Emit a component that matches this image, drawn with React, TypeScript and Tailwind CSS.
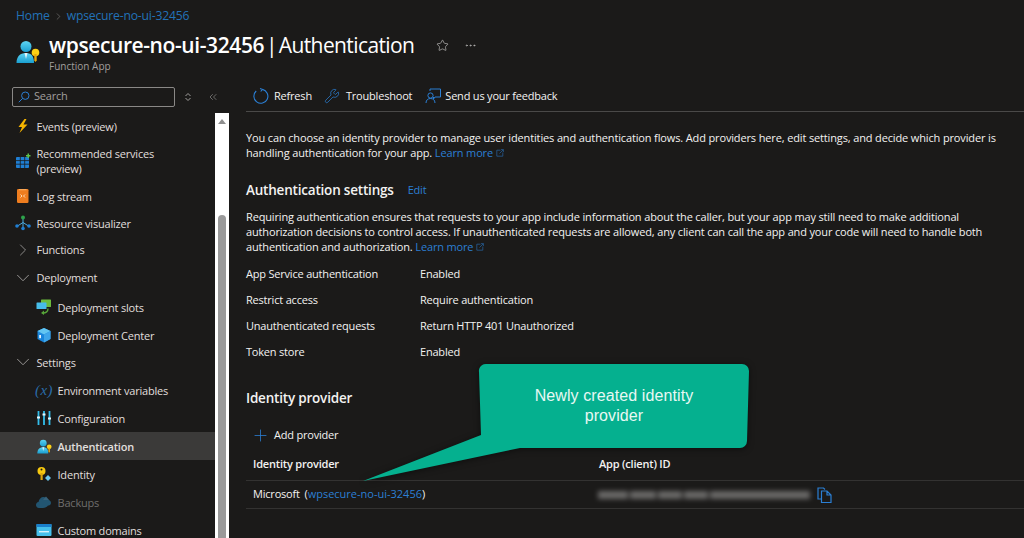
import React from "react";
import { ChevronRight, ChevronDown, Star, Ellipsis, ChevronsLeft, Wrench, Plus } from "lucide-react";

const UserKey = ({ s = 24 }: { s?: number }) => (
  <svg width={s} height={s} viewBox="0 0 24 24">
    <defs>
      <linearGradient id="uk" x1="0" y1="0" x2="0" y2="1"><stop offset="0" stopColor="#5ed4f2" /><stop offset="1" stopColor="#1a9fd0" /></linearGradient>
    </defs>
    <circle cx="10" cy="6.500" r="5.500" fill="url(#uk)" />
    <path d="M0.500 23c0-6 3-10 9.500-10 6 0 8 4 8 10z" fill="url(#uk)" />
    <path d="M8.500 13h3l-1.500 6z" fill="#fff" opacity=".85" />
    <circle cx="19.500" cy="12.500" r="3.800" fill="#fcd116" />
    <path d="M18.300 14h2.400v6.500l-1.200 1.500-1.200-1.500z" fill="#e8a90c" />
  </svg>
);

const Bolt = () => (
  <svg width="16" height="16" viewBox="0 0 16 16"><path d="M9.500 1 3.500 9h3.500L4.500 15 12.500 6.500H8.500L11.500 1z" fill="#f7b500" /></svg>
);
const GridIco = () => (
  <svg width="16" height="16" viewBox="0 0 16 16">
    <rect x="1" y="4" width="13" height="11" rx="1" fill="#1f7fd4" />
    <path d="M1 7.600h13M1 11.200h13M5.300 4v11M9.700 4v11" stroke="#1b1a19" strokeWidth=".8" />
    <path d="M12.500 0.500h1.500v1.500h1.500v1.500h-1.500v1.500h-1.500v-1.500h-1.500v-1.500h1.500z" fill="#5ec04c" />
  </svg>
);
const LogIco = () => (
  <svg width="16" height="16" viewBox="0 0 16 16">
    <rect x="2" y="1" width="11.500" height="14" rx="1.200" fill="#ee7d1f" />
    <path d="M5.500 6.500 7 8 5.500 9.500M10 6.500 8.500 8 10 9.500" stroke="#ffe3c4" strokeWidth=".9" fill="none" />
    <rect x="4" y="1" width="7.500" height="1.300" fill="#f9a655" />
  </svg>
);
const TreeIco = () => (
  <svg width="16" height="16" viewBox="0 0 16 16">
    <path d="M8 3v5M2.500 11 8 7.500l5.500 3.500M8 8v5" stroke="#4aa9e0" strokeWidth="1" fill="none" />
    <circle cx="8" cy="2.500" r="2" fill="#2ea34a" />
    <circle cx="2" cy="11" r="1.800" fill="#1f7fd4" /><circle cx="14" cy="11" r="1.800" fill="#1f7fd4" /><circle cx="8" cy="13.500" r="1.800" fill="#1f7fd4" />
  </svg>
);
const SlotsIco = () => (
  <svg width="16" height="16" viewBox="0 0 16 16">
    <rect x="5" y="0.500" width="10" height="7.500" rx=".6" fill="#6cbb3c" />
    <rect x="0.500" y="3.500" width="10" height="6.500" rx=".6" fill="#47bdea" />
    <path d="M12 9.500c0 3-2 4.500-5 4.500" stroke="#57a639" strokeWidth="1.400" fill="none" />
    <path d="M8 11.500 5 14l3 2z" fill="#57a639" />
  </svg>
);
const CubeIco = () => (
  <svg width="16" height="16" viewBox="0 0 16 16">
    <path d="M8 1 14.500 4v8L8 15.500 1.500 12V4z" fill="#1a86dc" />
    <path d="M8 1 14.500 4 8 7.500 1.500 4z" fill="#62c6f2" />
    <path d="M8 7.500 14.500 4v8L8 15.500z" fill="#3ea6ea" />
    <rect x="3.300" y="8" width="1.600" height="3.200" fill="#fff" />
  </svg>
);
const SliderIco = () => (
  <svg width="16" height="16" viewBox="0 0 16 16">
    <path d="M2.500 1v14M8 1v14M13.500 1v14" stroke="#32bdea" strokeWidth="1.800" />
    <path d="M1 7.500h3M6.500 4.500h3M12 8.500h3" stroke="#e6f6fc" strokeWidth="1.800" />
  </svg>
);
const KeyIco = () => (
  <svg width="16" height="16" viewBox="0 0 16 16">
    <circle cx="5.500" cy="5" r="4" fill="#f7c90f" />
    <rect x="4.500" y="7" width="2.200" height="7" fill="#dba50c" />
    <circle cx="5.500" cy="3.500" r="1" fill="#1b1a19" />
    <path d="m12 9 3 3-3 3-3-3z" fill="#6dc8ee" />
  </svg>
);
const CloudIco = () => (
  <svg width="16" height="16" viewBox="0 0 16 16" opacity=".5">
    <path d="M3 14C1 14 0 12.500 0 11s1-3 2.500-3C3 5 5 3 7.500 3c2 0 3 1 3.500 2.500 2 0 4 1.500 4 3.500 0 2-2 2.500-3 2.500C11 13 9 14 7 14z" fill="#2a90c8" />
    <path d="M7 6 10 2.500 13 6z" fill="#56aadb" />
  </svg>
);
const CardIco = () => (
  <svg width="16" height="16" viewBox="0 0 16 16">
    <rect x="0.500" y="2" width="15" height="12" rx="1" fill="#46c0ec" />
    <rect x="0.500" y="2" width="15" height="3" fill="#1a7fcb" />
    <rect x="3" y="9" width="10" height="1.400" fill="#d6f2fb" />
  </svg>
);
const FeedbackIco = () => (
  <svg width="16" height="16" viewBox="0 0 16 16" fill="none" stroke="#2b7fd4" strokeWidth="1">
    <circle cx="5.500" cy="7.500" r="2.600" />
    <path d="M1 15c0-3 2-4.500 4.500-4.500S10 12 10 15" />
    <path d="M5 3V1h10.500v8H10l-1.500 2V9" />
  </svg>
);
const RefreshIco = () => (
  <svg width="16" height="16" viewBox="0 0 16 16" fill="none" stroke="#2b7fd4" strokeWidth="1.100">
    <path d="M9.500 1.400A7 7 0 1 1 3.200 3" />
    <path d="M7 .5 9.500 1.400 7.700 3.500" />
  </svg>
);
const SearchIco = () => (
  <svg width="12" height="12" viewBox="0 0 12 12" fill="none" stroke="#2b7fd4" strokeWidth="1">
    <circle cx="7.300" cy="4.700" r="3.700" />
    <path d="M4.600 7.400.8 11.200" />
  </svg>
);
const ExtIco = () => (
  <svg width="8" height="8" viewBox="0 0 8 8" fill="none" stroke="#2b7fd4" strokeWidth=".7" className="inline -mt-[3px]" opacity=".75">
    <path d="M4.500 1.200H.8v6h6V3.500M3.500 4.500 7.300.7M5 .6h2.400V3" />
  </svg>
);
const CopyIco = () => (
  <svg width="15" height="16" viewBox="0 0 15 16" fill="none" stroke="#2b7fd4" strokeWidth="1.200">
    <path d="M5 12H1V1h5.500L8 2.500" />
    <path d="M4.500 4H10l4 4v7.500H4.500zM10 4v4h4" />
  </svg>
);

type Row = { label: React.ReactNode; icon?: React.ReactNode; h: string; sub?: boolean; active?: boolean; dim?: boolean };

const rows: Row[] = [
  { label: "Events (preview)", icon: <Bolt />, h: "h-[28px]" },
  { label: <>Recommended services<br />(preview)</>, icon: <GridIco />, h: "h-[42px]" },
  { label: "Log stream", icon: <LogIco />, h: "h-[28px]" },
  { label: "Resource visualizer", icon: <TreeIco />, h: "h-[26px]" },
  { label: "Functions", icon: <ChevronRight size={20} strokeWidth={1} color="#a19f9d" className="shrink-0" />, h: "h-[27px]" },
  { label: "Deployment", icon: <ChevronDown size={22} strokeWidth={1} color="#a19f9d" className="shrink-0" />, h: "h-[29px]" },
  { label: "Deployment slots", icon: <SlotsIco />, h: "h-[30px]", sub: true },
  { label: "Deployment Center", icon: <CubeIco />, h: "h-[26px]", sub: true },
  { label: "Settings", icon: <ChevronDown size={22} strokeWidth={1} color="#a19f9d" className="shrink-0" />, h: "h-[28px]" },
  { label: "Environment variables", icon: <span className="text-[15px] italic text-[#2a6ca8] leading-none whitespace-nowrap tracking-[0.5px] font-['Liberation_Serif',serif]">(x)</span>, h: "h-[28px]", sub: true },
  { label: "Configuration", icon: <SliderIco />, h: "h-[28px]", sub: true },
  { label: "Authentication", icon: <UserKey s={15} />, h: "h-[28px]", sub: true, active: true },
  { label: "Identity", icon: <KeyIco />, h: "h-[28px]", sub: true },
  { label: "Backups", icon: <CloudIco />, h: "h-[28px]", sub: true, dim: true },
  { label: "Custom domains", icon: <CardIco />, h: "h-[28px]", sub: true },
];

function SideRow({ r }: { r: Row }) {
  return (
    <div className={`${r.h} flex shrink-0 items-center ${r.active ? "bg-[#3b3a39] font-semibold" : ""} ${r.dim ? "text-[#6f6e6d]" : "text-[#e0dfdd]"} ${r.sub ? "pl-[36px]" : "pl-[15px]"}`}>
      <span className="w-[16px] h-[16px] flex items-center justify-center shrink-0">{r.icon}</span>
      <span className="leading-[15px] ml-[5.500px]">{r.label}</span>
    </div>
  );
}

const Setting = ({ k, v }: { k: string; v: string }) => (
  <div className="flex h-[26px] items-center">
    <span className="w-[174px]">{k}</span>
    <span>{v}</span>
  </div>
);

const link = "text-[#2b7fd4]";

export default function App() {
  return (
    <div className="relative w-[1024px] h-[538px] overflow-hidden bg-[#1b1a19] text-[#f3f2f1] text-[11px] font-['Open_Sans','Liberation_Sans',sans-serif] tracking-[-0.2px]">
      <div className="h-[33px] flex items-center pl-[16px] text-[#2272b8] text-[12.200px] pb-[1px]">
        <span>Home</span>
        <ChevronRight size={11} strokeWidth={1.2} color="#8a8886" className="mx-[3px]" />
        <span>wpsecure-no-ui-32456</span>
      </div>
      <div className="h-[45px] flex items-start pl-[16px]">
        <span className="mt-[7px] shrink-0"><UserKey s={24} /></span>
        <div className="ml-[9px] flex flex-col">
          <div className="flex items-center h-[24px]">
            <span className="text-[21px] leading-[24px] text-white whitespace-nowrap tracking-[-0.6px] [word-spacing:-3px]"><b className="font-semibold tracking-[-0.4px]">wpsecure-no-ui-32456</b> | Authentication</span>
            <Star size={13} strokeWidth={1.2} color="#c8c6c4" className="ml-[22px]" />
            <Ellipsis size={13} strokeWidth={1.2} color="#c8c6c4" className="ml-[15px]" />
          </div>
          <span className="mt-[2px] text-[10px] text-[#a19f9d] leading-[14px] tracking-normal">Function App</span>
        </div>
      </div>
      <div className="flex h-[460px]">
        <aside className="w-[229px] flex flex-col shrink-0">
          <div className="h-[35px] flex items-center pl-[12px] pt-[2px] shrink-0">
            <div className="w-[163px] h-[20px] border border-[#8a8886] rounded-[2px] flex items-center pl-[5px] text-[#a19f9d]">
              <SearchIco />
              <span className="ml-[4px]">Search</span>
            </div>
            <svg width="8" height="10" viewBox="0 0 8 10" className="ml-[9px]" fill="none" stroke="#a19f9d"><path d="M1.500 4 4 1.500 6.500 4M1.500 6 4 8.500 6.500 6" /></svg>
            <ChevronsLeft size={12} strokeWidth={1.2} color="#a19f9d" className="ml-[15px]" />
          </div>
          <div className="flex flex-1 min-h-0">
            <div className="w-[215px] overflow-hidden flex flex-col -mt-[1px]">
              {rows.map((r, i) => <SideRow key={i} r={r} />)}
            </div>
            <div className="w-[14px] bg-white flex flex-col items-center pt-[6px] relative">
              <div className="w-0 h-0 border-l-[4px] border-r-[4px] border-b-[5px] border-l-transparent border-r-transparent border-b-[#8f8f8f]" />
              <div className="w-[8px] rounded-t-[4px] bg-[#9a9a9a] absolute top-[102px] bottom-0" />
            </div>
          </div>
        </aside>
        <main className="flex-1 min-w-0 pl-[17px]">
          <div className="h-[34px] flex items-center border-b border-[#4a4948] text-[#f3f2f1] pl-[7px] pt-[3px]">
            <RefreshIco />
            <span className="ml-[5px]">Refresh</span>
            <Wrench size={16} strokeWidth={1.1} color="#2b7fd4" className="ml-[12px]" />
            <span className="ml-[6px]">Troubleshoot</span>
            <span className="ml-[13px]"><FeedbackIco /></span>
            <span className="ml-[4px]">Send us your feedback</span>
          </div>
          <p className="mt-[18px] leading-[15px] w-[770px] tracking-[-0.14px]">
            You can choose an identity provider to manage user identities and authentication flows. Add providers here, edit settings, and decide which provider is handling authentication for your app. <span className={link}>Learn more <ExtIco /></span>
          </p>
          <div className="mt-[20px] flex items-center h-[20px]">
            <span className="text-[13.500px] font-semibold">Authentication settings</span>
            <span className={`ml-[14px] ${link}`}>Edit</span>
          </div>
          <p className="mt-[9px] leading-[15px] w-[770px] tracking-[-0.15px]">
            Requiring authentication ensures that requests to your app include information about the caller, but your app may still need to make additional authorization decisions to control access. If unauthenticated requests are allowed, any client can call the app and your code will need to handle both authentication and authorization. <span className={link}>Learn more <ExtIco /></span>
          </p>
          <div className="mt-[7px]">
            <Setting k="App Service authentication" v="Enabled" />
            <Setting k="Restrict access" v="Require authentication" />
            <Setting k="Unauthenticated requests" v="Return HTTP 401 Unauthorized" />
            <Setting k="Token store" v="Enabled" />
          </div>
          <div className="mt-[23px] h-[20px] flex items-center text-[13.500px] font-semibold">Identity provider</div>
          <div className="mt-[17px] h-[20px] flex items-center pl-[5px]">
            <Plus size={19} strokeWidth={1} color="#2b7fd4" />
            <span className="ml-[4px]">Add provider</span>
          </div>
          <div className="mt-[7px] h-[29px] flex items-center pl-[7px] pb-[3px] font-semibold border-b border-[#333231] w-[778px]">
            <span className="w-[346px]">Identity provider</span>
            <span>App (client) ID</span>
          </div>
          <div className="h-[28px] flex items-center pl-[7px] border-b border-[#333231] w-[778px]">
            <span className="w-[345px]">Microsoft <span className="ml-[2px] tracking-normal">(<span className={link}>wpsecure-no-ui-32456</span>)</span></span>
            <span className="w-[214px] flex gap-[2px] blur-[2.500px] opacity-70">
              <span className="h-[8px] w-[30px] bg-[#8a8988]" />
              <span className="h-[8px] w-[26px] bg-[#8a8988]" />
              <span className="h-[8px] w-[24px] bg-[#8a8988]" />
              <span className="h-[8px] w-[24px] bg-[#8a8988]" />
              <span className="h-[8px] w-[100px] bg-[#8a8988]" />
            </span>
            <span className="ml-[5px]"><CopyIco /></span>
          </div>
        </main>
      </div>
      <div className="absolute left-[360px] top-[362px] w-[392px] h-[122px]">
        <svg width="392" height="122" viewBox="0 0 392 122" className="absolute inset-0 drop-shadow-[0_1px_3px_rgba(0,0,0,0.5)]">
          <path d="M127 2h255a7 7 0 0 1 7 7l-2 70a7 7 0 0 1-7 7H160L3 119 121 73 119 10a7 7 0 0 1 8-8z" fill="#05b08f" />
        </svg>
        <div className="absolute left-[119px] top-[2px] w-[270px] h-[84px] flex items-center justify-center text-center text-[16px] leading-[20px] text-[#e8f8f4] font-['Liberation_Sans',sans-serif] tracking-[0.1px]">
          <span>Newly created identity<br />provider</span>
        </div>
      </div>
    </div>
  );
}
